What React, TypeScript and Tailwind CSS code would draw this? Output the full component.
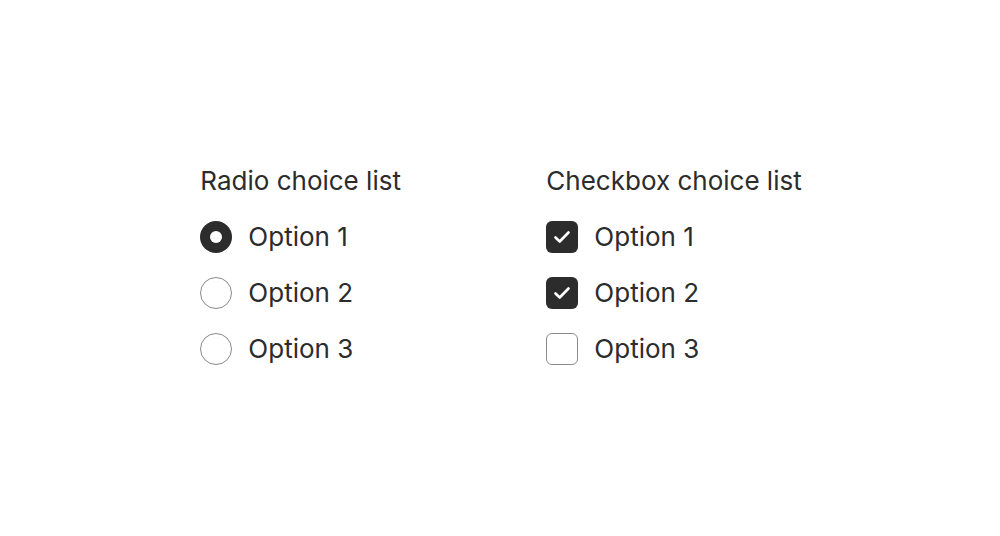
import React from "react";

function Radio({ checked }: { checked?: boolean }) {
  return checked ? (
    <span className="w-8 h-8 rounded-full bg-[#2c2c2c] flex items-center justify-center shrink-0">
      <span className="w-3 h-3 rounded-full bg-white" />
    </span>
  ) : (
    <span className="w-8 h-8 rounded-full border border-[#8a8a8a] bg-white shrink-0" />
  );
}

function Checkbox({ checked }: { checked?: boolean }) {
  return checked ? (
    <span className="w-8 h-8 rounded-[6px] bg-[#2c2c2c] flex items-center justify-center shrink-0">
      <svg width="32" height="32" viewBox="0 0 32 32" fill="none">
        <path d="M9.5 16.5l4.2 4L22.5 11.5" stroke="white" strokeWidth="2.6" strokeLinecap="round" strokeLinejoin="round" />
      </svg>
    </span>
  ) : (
    <span className="w-8 h-8 rounded-[6px] border border-[#8a8a8a] bg-white shrink-0" />
  );
}

export default function App() {
  const opts = ["Option 1", "Option 2", "Option 3"];
  return (
    <div className="w-[1000px] h-[536px] bg-white flex items-center justify-center text-[#2c2c2c]" style={{ fontFamily: "Inter, sans-serif" }}>
      <div className="flex -mt-[6px] pl-[2px]">
        <div className="flex flex-col gap-6 w-[346px]">
          <div className="text-[26px] leading-8">Radio choice list</div>
          {opts.map((o, i) => (
            <div key={o} className="flex items-center gap-4">
              <Radio checked={i === 0} />
              <span className="text-[26px] leading-8">{o}</span>
            </div>
          ))}
        </div>
        <div className="flex flex-col gap-6">
          <div className="text-[26px] leading-8">Checkbox choice list</div>
          {opts.map((o, i) => (
            <div key={o} className="flex items-center gap-4">
              <Checkbox checked={i < 2} />
              <span className="text-[26px] leading-8">{o}</span>
            </div>
          ))}
        </div>
      </div>
    </div>
  );
}
